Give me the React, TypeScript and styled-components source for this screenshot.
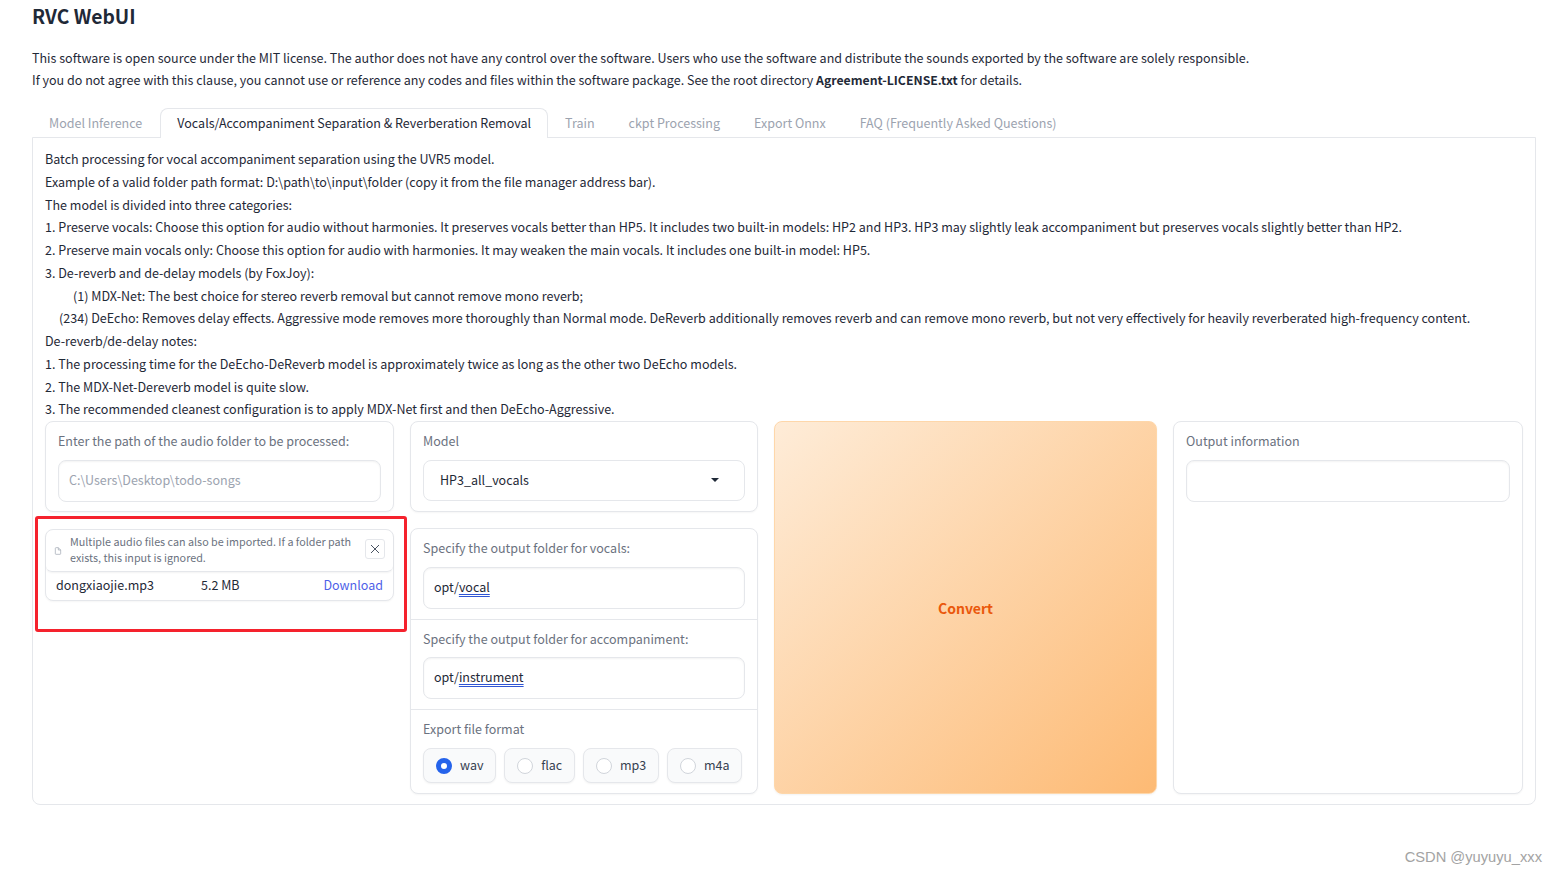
import React from "react";
import styled, { createGlobalStyle } from "styled-components";

const Global = createGlobalStyle`
  html, body { margin: 0; padding: 0; background: #fff; }
  body { font-family: "Noto Sans CJK SC", "Noto Sans", sans-serif; color: #1f2937; font-size: 12.52px; }
  * { box-sizing: border-box; }
`;

const Page = styled.div`
  position: relative;
  width: 1557px;
  height: 874px;
  overflow: hidden;
  padding: 0 21px 0 32px;
`;
const Title = styled.h2`
  margin: 0;
  padding-top: 2px;
  font-size: 19.25px;
  line-height: 28px;
  font-weight: 600;
  color: #1f2937;
`;
const Notice = styled.div`
  margin-top: 17px;
  line-height: 22px;
  height: 44px;
  white-space: nowrap;
  color: #1f2937;
  b { font-weight: 600; font-size: 12.27px; }
`;
const Tabs = styled.div`
  display: flex;
  height: 30px;
  margin-top: 17px;
  position: relative;
  z-index: 1;
`;
const Tab = styled.div<{ $active?: boolean }>`
  height: 30px;
  padding: 0 17px;
  line-height: 30px;
  white-space: nowrap;
  color: ${(p) => (p.$active ? "#1f2937" : "#9ca3af")};
  ${(p) =>
    p.$active
      ? "background: #fff; border: 1px solid #e5e7eb; border-bottom: 0; border-radius: 8px 8px 0 0; padding: 0 16px; margin-left: 1px; line-height: 28px;"
      : ""}
`;
const Panel = styled.div`
  height: 668px;
  margin-top: -1px;
  border: 1px solid #e5e7eb;
  border-radius: 0 0 8px 8px;
  padding: 10px 12px;
`;
const Intro = styled.div`
  font-size: 12.54px;
  line-height: 22.75px;
  white-space: pre;
  height: 273px;
  color: #1f2937;
`;
const Columns = styled.div`
  display: grid;
  grid-template-columns: 349px 348px 383px 350px;
  column-gap: 16px;
  height: 373px;
`;
const Stack = styled.div`
  display: flex;
  flex-direction: column;
  min-height: 0;
`;
const Card = styled.div<{ $gap?: number; $height?: number; $fill?: boolean }>`
  border: 1px solid #e5e7eb;
  border-radius: 8px;
  box-shadow: 0 1px 2px rgba(0, 0, 0, 0.04);
  background: #fff;
  margin-bottom: ${(p) => p.$gap ?? 0}px;
  ${(p) => (p.$height ? `height: ${p.$height}px;` : "")}
  ${(p) => (p.$fill ? "flex: 1;" : "")}
`;
const Section = styled.div<{ $divider?: boolean }>`
  padding: 8px 12px 10px;
  ${(p) => (p.$divider ? "border-top: 1px solid #e5e7eb;" : "")}
`;
const Label = styled.div<{ $mb?: number }>`
  line-height: 21px;
  color: #6b7280;
  margin-bottom: ${(p) => p.$mb ?? 9}px;
  white-space: nowrap;
`;
const Input = styled.div<{ $muted?: boolean; $h?: number }>`
  height: ${(p) => p.$h ?? 42}px;
  border: 1px solid #e5e7eb;
  border-radius: 8px;
  box-shadow: inset 0 1px 2px rgba(0, 0, 0, 0.05);
  padding: 0 10px 4px;
  display: flex;
  align-items: center;
  color: ${(p) => (p.$muted ? "#9ca3af" : "#1f2937")};
  white-space: nowrap;
`;
const SelectBox = styled(Input)`
  padding: 0 25px 2px 16px;
  justify-content: space-between;
  box-shadow: none;
`;
const Caret = styled.span`
  width: 0;
  height: 0;
  border-left: 4px solid transparent;
  border-right: 4px solid transparent;
  border-top: 4px solid #1f2937;
`;
const Spell = styled.span`
  text-decoration: underline double #2f55d4;
  text-underline-offset: 2px;
  text-decoration-thickness: 1px;
`;
const FileHead = styled.div`
  display: flex;
  align-items: center;
  height: 42px;
  padding: 0 8px;
  border-bottom: 1px solid #e5e7eb;
  border-radius: 8px 8px 6px 6px;
  box-shadow: 0 1px 2px rgba(0, 0, 0, 0.05);
`;
const FileHint = styled.div`
  flex: 1;
  margin: 0 0 4px 8px;
  font-size: 10.78px;
  line-height: 16px;
  color: #6b7280;
`;
const CloseBtn = styled.div`
  width: 20px;
  height: 20px;
  margin: 0 0 4px 12px;
  border: 1px solid #e5e7eb;
  border-radius: 3px;
  display: flex;
  align-items: center;
  justify-content: center;
`;
const FileRow = styled.div`
  display: flex;
  align-items: center;
  height: 28px;
  padding: 0 10px 4px;
  color: #1f2937;
`;
const FileName = styled.span`
  width: 145px;
`;
const FileSize = styled.span`
  flex: 1;
`;
const Download = styled.span`
  color: #4f5fe8;
`;
const Radios = styled.div`
  display: flex;
  gap: 8px;
`;
const Radio = styled.div`
  height: 35px;
  padding: 0 11.7px 2px 12px;
  display: flex;
  align-items: center;
  gap: 8px;
  border: 1px solid #e5e7eb;
  border-radius: 8px;
  background: #f9fafb;
  box-shadow: 0 1px 2px rgba(0, 0, 0, 0.05);
  color: #374151;
`;
const Dot = styled.span<{ $on?: boolean }>`
  width: 16px;
  height: 16px;
  margin-top: 2px;
  border-radius: 50%;
  background: #fff;
  border: ${(p) => (p.$on ? "5px solid #2563eb" : "1px solid #d1d5db")};
`;
const Convert = styled.div`
  border: 1px solid #fed7aa;
  border-radius: 8px;
  background: linear-gradient(to bottom right, #feecd8, #fdba74);
  box-shadow: 0 1px 2px rgba(0, 0, 0, 0.05);
  display: flex;
  align-items: center;
  justify-content: center;
  font-size: 14px;
  font-weight: 600;
  color: #ea580c;
`;
const RedFrame = styled.div`
  position: absolute;
  left: 35px;
  top: 516px;
  width: 372px;
  height: 116px;
  border: 3px solid #f5222d;
  border-radius: 3px;
  pointer-events: none;
`;
const Watermark = styled.div`
  position: absolute;
  right: 15px;
  top: 847px;
  font-family: "Liberation Sans", Arial, sans-serif;
  font-size: 14.7px;
  line-height: 20px;
  color: #a3a3a3;
`;

const intro = [
  "Batch processing for vocal accompaniment separation using the UVR5 model.",
  "Example of a valid folder path format: D:\\path\\to\\input\\folder (copy it from the file manager address bar).",
  "The model is divided into three categories:",
  "1. Preserve vocals: Choose this option for audio without harmonies. It preserves vocals better than HP5. It includes two built-in models: HP2 and HP3. HP3 may slightly leak accompaniment but preserves vocals slightly better than HP2.",
  "2. Preserve main vocals only: Choose this option for audio with harmonies. It may weaken the main vocals. It includes one built-in model: HP5.",
  "3. De-reverb and de-delay models (by FoxJoy):",
  "          (1) MDX-Net: The best choice for stereo reverb removal but cannot remove mono reverb;",
  "     (234) DeEcho: Removes delay effects. Aggressive mode removes more thoroughly than Normal mode. DeReverb additionally removes reverb and can remove mono reverb, but not very effectively for heavily reverberated high-frequency content.",
  "De-reverb/de-delay notes:",
  "1. The processing time for the DeEcho-DeReverb model is approximately twice as long as the other two DeEcho models.",
  "2. The MDX-Net-Dereverb model is quite slow.",
  "3. The recommended cleanest configuration is to apply MDX-Net first and then DeEcho-Aggressive.",
].join("\n");

const tabs = [
  "Model Inference",
  "Vocals/Accompaniment Separation & Reverberation Removal",
  "Train",
  "ckpt Processing",
  "Export Onnx",
  "FAQ (Frequently Asked Questions)",
];

export default function App() {
  return (
    <Page>
      <Global />
      <Title>RVC WebUI</Title>
      <Notice>
        This software is open source under the MIT license. The author does not have any control over the software. Users who use the software and distribute the sounds exported by the software are solely responsible.
        <br />
        If you do not agree with this clause, you cannot use or reference any codes and files within the software package. See the root directory <b>Agreement-LICENSE.txt</b> for details.
      </Notice>
      <Tabs>
        {tabs.map((t, i) => (
          <Tab key={t} $active={i === 1}>{t}</Tab>
        ))}
      </Tabs>
      <Panel>
        <Intro>{intro}</Intro>
        <Columns>
          <Stack>
            <Card $gap={17} $height={91}>
              <Section>
                <Label>Enter the path of the audio folder to be processed:</Label>
                <Input $muted>C:\Users\Desktop\todo-songs</Input>
              </Section>
            </Card>
            <Card $height={72}>
              <FileHead>
                <svg width="8" height="8" viewBox="0 0 24 24" fill="none" stroke="#9ca3af" strokeWidth="2">
                  <path d="M13 2H6a2 2 0 0 0-2 2v16a2 2 0 0 0 2 2h12a2 2 0 0 0 2-2V9z" />
                  <path d="M13 2v7h7" />
                </svg>
                <FileHint>Multiple audio files can also be imported. If a folder path exists, this input is ignored.</FileHint>
                <CloseBtn>
                  <svg width="10" height="10" viewBox="0 0 10 10" stroke="#4b5563" strokeWidth="1">
                    <path d="M1 1l8 8M9 1l-8 8" />
                  </svg>
                </CloseBtn>
              </FileHead>
              <FileRow>
                <FileName>dongxiaojie.mp3</FileName>
                <FileSize>5.2 MB</FileSize>
                <Download>Download</Download>
              </FileRow>
            </Card>
          </Stack>
          <Stack>
            <Card $gap={16} $height={91}>
              <Section>
                <Label>Model</Label>
                <SelectBox $h={41}>
                  HP3_all_vocals
                  <Caret />
                </SelectBox>
              </Section>
            </Card>
            <Card $fill>
              <Section>
                <Label>Specify the output folder for vocals:</Label>
                <Input>opt/<Spell>vocal</Spell></Input>
              </Section>
              <Section $divider>
                <Label $mb={8}>Specify the output folder for accompaniment:</Label>
                <Input>opt/<Spell>instrument</Spell></Input>
              </Section>
              <Section $divider>
                <Label>Export file format</Label>
                <Radios>
                  <Radio><Dot $on />wav</Radio>
                  <Radio><Dot />flac</Radio>
                  <Radio><Dot />mp3</Radio>
                  <Radio><Dot />m4a</Radio>
                </Radios>
              </Section>
            </Card>
          </Stack>
          <Convert>Convert</Convert>
          <Card>
            <Section>
              <Label>Output information</Label>
              <Input />
            </Section>
          </Card>
        </Columns>
      </Panel>
      <RedFrame />
      <Watermark>CSDN @yuyuyu_xxx</Watermark>
    </Page>
  );
}
